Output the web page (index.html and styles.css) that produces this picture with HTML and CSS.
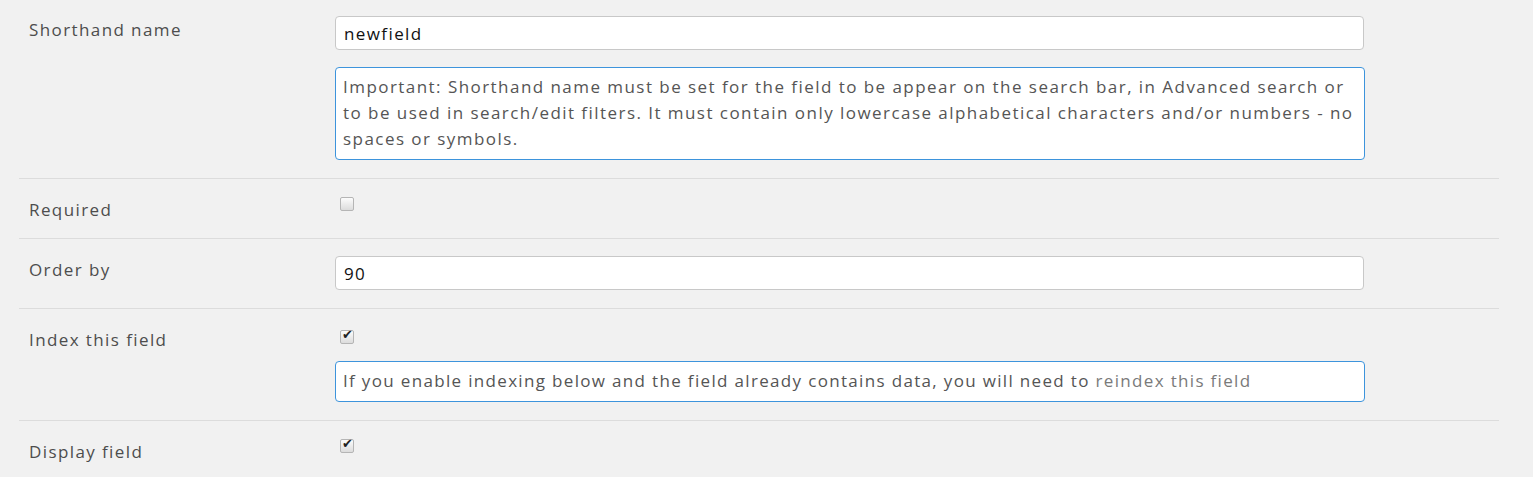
FILE: index.html
```html
<!DOCTYPE html>
<html lang="en">
<head>
  <meta charset="UTF-8" />
  <title>Field options</title>
  <link rel="stylesheet" href="styles.css">
</head>
<body>

  <div class="field-form">
    <div class="row">
      <label class="row-label" for="shorthand">Shorthand name</label>
      <div class="row-controls">
        <input type="text" id="shorthand" class="text-input" value="newfield" />
        <div class="help-box">Important: Shorthand name must be set for the field to be appear on the search bar, in Advanced search or to be used in search/edit filters. It must contain only lowercase alphabetical characters and/or numbers - no spaces or symbols.</div>
      </div>
    </div>

    <div class="row">
      <label class="row-label" for="required">Required</label>
      <div class="row-controls">
        <input type="checkbox" id="required" class="check" />
      </div>
    </div>

    <div class="row">
      <label class="row-label" for="orderby">Order by</label>
      <div class="row-controls">
        <input type="text" id="orderby" class="text-input" value="90" />
      </div>
    </div>

    <div class="row">
      <label class="row-label" for="indexfield">Index this field</label>
      <div class="row-controls">
        <div class="check-line"><input type="checkbox" id="indexfield" class="check" checked /></div>
        <div class="help-box help-box-short">If you enable indexing below and the field already contains data, you will need to <span class="help-link">reindex this field</span></div>
      </div>
    </div>

    <div class="row">
      <label class="row-label" for="display">Display field</label>
      <div class="row-controls">
        <input type="checkbox" id="display" class="check" checked />
      </div>
    </div>
  </div>

</body>
</html>
```

FILE: styles.css
```css
body {
  margin: 0;
  background-color: #f1f1f1;
  font-family: "Open Sans", "Liberation Sans", sans-serif;
  font-size: 17px;
  letter-spacing: 1.4px;
  color: #4d4d4d;
}

.field-form {
  margin-left: 19px;
  width: 1480px;
}

.row {
  display: flex;
  padding: 17px 0 18px 10px;
  border-bottom: 1px solid #dcdcdc;
}

.row:first-child {
  padding-top: 16px;
}

.row-label {
  width: 306px;
  flex-shrink: 0;
  padding-top: 4px;
  line-height: 20px;
}

.row-controls {
  display: flex;
  flex-direction: column;
  gap: 17px;
}

.text-input {
  box-sizing: border-box;
  width: 1029px;
  height: 34px;
  margin: 0;
  padding: 0 8px;
  border: 1px solid #c8c8c8;
  border-radius: 4px;
  background-color: #fff;
  font-family: inherit;
  font-size: 17px;
  letter-spacing: 1.4px;
  color: #111;
}

.help-box {
  box-sizing: border-box;
  width: 1030px;
  padding: 6px 7px 7px;
  border: 1px solid #3d94dc;
  border-radius: 4px;
  background-color: #fff;
  line-height: 26px;
  letter-spacing: 1.45px;
  color: #555;
}

.help-box-short {
  letter-spacing: 1.33px;
}

.help-link {
  color: #7a7a7a;
}

.check {
  appearance: none;
  box-sizing: border-box;
  width: 14px;
  height: 14px;
  margin: 1px 0 0 5px;
  border: 1px solid #b5b5b5;
  border-radius: 2px;
  background: linear-gradient(#fcfcfc, #dcdcdc);
  position: relative;
}

.check:checked::after {
  content: "\2714";
  position: absolute;
  left: 1px;
  top: -4px;
  font-size: 13px;
  letter-spacing: 0;
  color: #222;
}

.check-line {
  height: 18px;
}
```
